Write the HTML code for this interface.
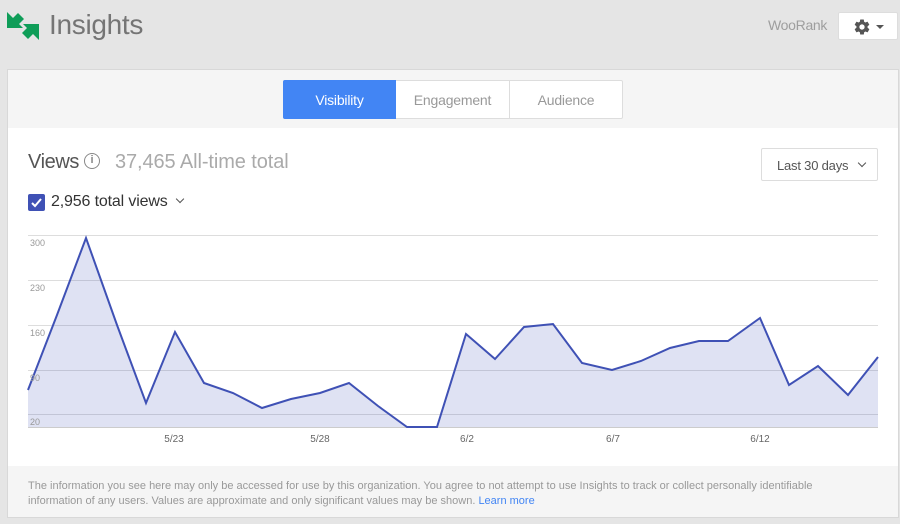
<!DOCTYPE html>
<html><head><style>
*{margin:0;padding:0;box-sizing:border-box}
body{width:900px;height:524px;background:#e5e5e5;font-family:"Liberation Sans",sans-serif;position:relative;overflow:hidden}
.abs{position:absolute}
</style></head><body>
<svg class="abs" style="left:0;top:0" width="46" height="46" viewBox="0 0 46 46">
<polygon points="7,12 7,28 23,28" fill="#0f9d58"/>
<polygon points="10,21 18,13 24,19 16,27" fill="#0f9d58"/>
<polygon points="39,40 39,24 23,24" fill="#0f9d58"/>
<polygon points="36,31 28,39 22,33 30,25" fill="#0f9d58"/>
</svg>
<div class="abs" style="left:49px;top:9px;font-size:28px;color:#757575;letter-spacing:-0.3px">Insights</div>
<div class="abs" style="left:768px;top:17px;font-size:14px;color:#9e9e9e;letter-spacing:-0.3px">WooRank</div>
<div class="abs" style="left:838px;top:12px;width:60px;height:28px;background:#fff;border:1px solid #ddd;border-radius:2px">
<svg class="abs" style="left:14px;top:5px" width="18" height="18" viewBox="0 0 24 24"><path fill="#555" d="M19.4 13c.04-.33.06-.66.06-1s-.02-.67-.06-1l2.1-1.650c.2-.15.24-.42.12-.64l-2-3.46c-.12-.22-.39-.3-.61-.22l-2.49 1c-.52-.4-1.080-.73-1.690-.98l-.38-2.650C14.43 2.180 14.22 2 14 2h-4c-.22 0-.43.18-.46.4l-.38 2.65c-.61.25-1.17.59-1.690.98l-2.49-1c-.23-.09-.49 0-.61.22l-2 3.46c-.13.22-.07.49.12.64L4.6 11c-.04.33-.07.66-.07 1s.03.67.07 1l-2.1 1.65c-.2.15-.25.42-.12.64l2 3.46c.12.22.39.3.61.22l2.49-1c.52.4 1.08.73 1.69.98l.38 2.65c.03.22.24.4.46.4h4c.22 0 .43-.18.46-.4l.38-2.65c.61-.25 1.17-.59 1.69-.98l2.49 1c.23.09.49 0 .61-.22l2-3.46c.12-.22.07-.49-.12-.64L19.4 13zM12 15.5c-1.93 0-3.5-1.57-3.5-3.5s1.57-3.5 3.5-3.5 3.5 1.57 3.5 3.5-1.57 3.5-3.5 3.5z"/></svg>
<div class="abs" style="left:37px;top:12px;border-left:4px solid transparent;border-right:4px solid transparent;border-top:4px solid #555"></div>
</div>
<div class="abs" style="left:7px;top:69px;width:892px;height:449px;background:#f5f5f5;border:1px solid #d8d8d8"></div>
<div class="abs" style="left:283px;top:80px;width:340px;height:39px;border:1px solid #ddd;border-radius:2px;background:#fff;display:flex;font-size:14px;color:#999;letter-spacing:-0.2px">
<div style="width:113px;background:#4285f4;color:#fff;display:flex;align-items:center;justify-content:center;margin:-1px 0 -1px -1px;border-radius:2px 0 0 2px">Visibility</div>
<div style="width:114px;border-right:1px solid #ddd;display:flex;align-items:center;justify-content:center">Engagement</div>
<div style="flex:1;display:flex;align-items:center;justify-content:center">Audience</div>
</div>
<div class="abs" style="left:8px;top:128px;width:890px;height:338px;background:#fff"></div>
<div class="abs" style="left:28px;top:151px;font-size:20px;color:#555;letter-spacing:-0.4px">Views</div>
<div class="abs" style="left:84px;top:153px;width:16px;height:16px;border:1.5px solid #888;border-radius:50%;font-size:11px;color:#888;text-align:center;line-height:13px;font-weight:bold">i</div>
<div class="abs" style="left:115px;top:151px;font-size:20px;color:#aaa;letter-spacing:-0.1px">37,465 All-time total</div>
<div class="abs" style="left:761px;top:148px;width:117px;height:33px;border:1px solid #ddd;border-radius:2px;font-size:13px;color:#555;padding:9px 0 0 15px;letter-spacing:-0.2px">Last 30 days</div>
<div class="abs" style="left:859px;top:160px;width:6px;height:6px;border-right:1.5px solid #555;border-bottom:1.5px solid #555;transform:rotate(45deg)"></div>
<div class="abs" style="left:28px;top:194px;width:17px;height:17px;background:#3f51b5;border-radius:2px"></div>
<svg class="abs" style="left:28px;top:194px" width="17" height="17"><path d="M4 9 L7 12 L13 5" stroke="#fff" stroke-width="2" fill="none"/></svg>
<div class="abs" style="left:51px;top:193px;font-size:16px;color:#333;letter-spacing:-0.15px">2,956 total views</div>
<div class="abs" style="left:177px;top:196px;width:6px;height:6px;border-right:1.5px solid #555;border-bottom:1.5px solid #555;transform:rotate(45deg)"></div>
<svg class="abs" style="left:0;top:0" width="900" height="466">
<g stroke="#ddd" stroke-width="1">
<line x1="28" y1="235.5" x2="878" y2="235.5"/><line x1="28" y1="280.5" x2="878" y2="280.5"/><line x1="28" y1="325.5" x2="878" y2="325.5"/><line x1="28" y1="370.5" x2="878" y2="370.5"/><line x1="28" y1="414.5" x2="878" y2="414.5"/><line x1="28" y1="427.5" x2="878" y2="427.5" stroke="#ccc"/>
</g>
<path d="M28,390 L57,315 L86,238 L117,325 L146,403 L175,332 L204,383 L233,393 L262,408 L291,399 L320,393 L349,383 L378,406 L407,427 L437,427 L466,334 L495,359 L524,327 L553,324 L582,363 L612,370 L641,361 L670,348 L699,341 L728,341 L760,318 L789,385 L818,366 L848,395 L878,357 L878,427 L28,427 Z" fill="#3f51b5" fill-opacity="0.17"/>
<path d="M28,390 L57,315 L86,238 L117,325 L146,403 L175,332 L204,383 L233,393 L262,408 L291,399 L320,393 L349,383 L378,406 L407,427 L437,427 L466,334 L495,359 L524,327 L553,324 L582,363 L612,370 L641,361 L670,348 L699,341 L728,341 L760,318 L789,385 L818,366 L848,395 L878,357" fill="none" stroke="#3f51b5" stroke-width="2"/>
<g font-family="Liberation Sans" font-size="9" fill="#999">
<text x="30" y="246">300</text><text x="30" y="291">230</text><text x="30" y="336">160</text><text x="30" y="381">90</text><text x="30" y="425">20</text>
</g>
<g font-family="Liberation Sans" font-size="10" fill="#666" text-anchor="middle">
<text x="174" y="442">5/23</text><text x="320" y="442">5/28</text><text x="467" y="442">6/2</text><text x="613" y="442">6/7</text><text x="760" y="442">6/12</text>
</g>
</svg>
<div class="abs" style="left:28px;top:479px;width:820px;font-size:11px;line-height:15px;color:#999">The information you see here may only be accessed for use by this organization. You agree to not attempt to use Insights to track or collect personally identifiable information of any users. Values are approximate and only significant values may be shown. <span style="color:#4285f4">Learn more</span></div>
</body></html>
